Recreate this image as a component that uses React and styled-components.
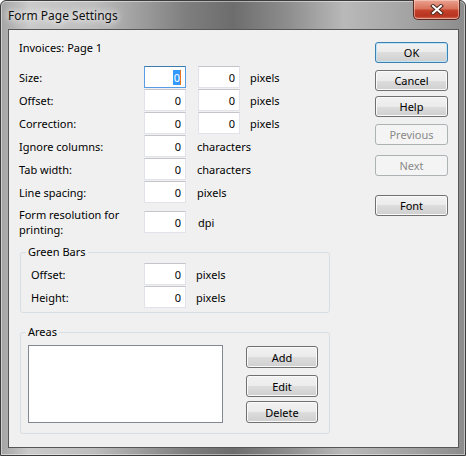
import React from 'react'
import styled, { createGlobalStyle } from 'styled-components'

const GlobalStyle = createGlobalStyle`
    html, body {
        margin: 0;
        padding: 0;
        background: #ffffff;
    }
    body {
        font-family: "Segoe UI", "Noto Sans", sans-serif;
        font-size: 11px;
        color: #000;
    }
`

//Ventana

const Window = styled.div`
    width: 466px;
    height: 456px;
    box-sizing: border-box;
    display: flex;
    flex-direction: column;
    border: 1px solid #3c3c3c;
    border-radius: 6px 6px 0 0;
    padding: 0 6px 7px 7px;
    background:
        linear-gradient(to right, #a4a4a4 0%, #cacaca 6%, #bdbdbd 20%, #7e7e7e 40%, #6d6d6d 50%, #8e8e8e 62%, #b9b9b9 74%, #a3a3a3 88%, #8c8c8c 100%);
    box-shadow: inset 0 0 0 1px rgba(255, 255, 255, 0.45);
`

const TitleBar = styled.div`
    height: 28px;
    display: flex;
    align-items: flex-start;
    flex-shrink: 0;
`

const Title = styled.div`
    margin-top: 7px;
    font-size: 12px;
    line-height: 15px;
    color: #101010;
    text-shadow: 0 0 6px #ffffff, 0 0 10px #ffffff;
`

const CloseBtn = styled.div`
    margin-left: auto;
    margin-right: -1px;
    margin-top: -1px;
    width: 47px;
    height: 20px;
    box-sizing: border-box;
    border: 1px solid #5a2a20;
    border-top: none;
    border-radius: 0 0 5px 5px;
    display: flex;
    align-items: center;
    justify-content: center;
    background: linear-gradient(#eaa390 0%, #d9735d 45%, #c4412a 55%, #b83320 85%, #d27560 100%);
    box-shadow: inset 0 0 0 1px rgba(255, 220, 210, 0.5);
`

const Client = styled.div`
    flex: 1;
    display: flex;
    border: 1px solid #565656;
    background: #f0f0f0;
`

//Formulario

const LeftCol = styled.div`
    display: flex;
    flex-direction: column;
    padding: 10px 0 0 10px;
`

const Heading = styled.div`
    line-height: 15px;
`

const Rows = styled.div`
    display: flex;
    flex-direction: column;
    gap: 1px;
    margin-top: ${p => p.$mt || 0}px;
`

const Row = styled.div`
    display: flex;
    align-items: center;
    min-height: 22px;
    margin-top: ${p => p.$mt || 0}px;
`

const Label = styled.div`
    width: ${p => p.$w || 125}px;
    line-height: 15px;
    flex-shrink: 0;
`

const TextBox = styled.div`
    width: 42px;
    height: 22px;
    box-sizing: border-box;
    margin-left: ${p => p.$ml || 0}px;
    background: #fff;
    border: 1px solid ${p => p.$focused ? '#569de5' : '#e2e3ea'};
    border-top-color: ${p => p.$focused ? '#3d7bad' : '#c3c5cb'};
    display: flex;
    align-items: center;
    justify-content: flex-end;
    padding-right: 4px;
    line-height: 15px;
`

const Selected = styled.span`
    background: #3399ff;
    color: #fff;
    border-right: 1px solid #e8731c;
    padding: 0 0 0 1px;
`

const Unit = styled.div`
    margin-left: ${p => p.$ml || 10}px;
    line-height: 15px;
`

const Group = styled.div`
    position: relative;
    width: 310px;
    box-sizing: border-box;
    margin-left: 1px;
    margin-top: ${p => p.$mt}px;
    border: 1px solid #d5dfe5;
    border-radius: 3px;
    padding: ${p => p.$pad};
`

const Caption = styled.span`
    position: absolute;
    top: -9px;
    left: 5px;
    padding: 0 2px;
    line-height: 15px;
    background: #f0f0f0;
`

const AreasBody = styled.div`
    display: flex;
    align-items: flex-start;
`

const ListBox = styled.div`
    width: 195px;
    height: 78px;
    box-sizing: border-box;
    background: #fff;
    border: 1px solid #828790;
`

const AreaButtons = styled.div`
    display: flex;
    flex-direction: column;
    margin-left: 23px;
    margin-top: 1px;
`

//Botones

const RightCol = styled.div`
    margin-left: auto;
    margin-right: 10px;
    padding-top: 12px;
    display: flex;
    flex-direction: column;
`

const Button = styled.div`
    width: ${p => p.$w || 73}px;
    height: ${p => p.$h || 21}px;
    box-sizing: border-box;
    margin-top: ${p => p.$mt || 0}px;
    border: 1px solid ${p => p.$default ? '#3c7fb1' : p.$disabled ? '#adb2b5' : '#707070'};
    border-radius: 3px;
    display: flex;
    align-items: center;
    justify-content: center;
    line-height: 15px;
    color: ${p => p.$disabled ? '#8a8a8a' : '#000'};
    background: ${p => p.$disabled
        ? '#f4f4f4'
        : 'linear-gradient(#f2f2f2 0%, #ebebeb 50%, #dddddd 50%, #cfcfcf 100%)'};
    box-shadow: inset 0 0 0 1px ${p => p.$default ? '#bfe3f7' : p.$disabled ? '#f4f4f4' : '#fafafa'};
`

const CloseIcon = () => (
    <svg width="14" height="11" viewBox="0 0 14 11">
        <path d="M3 2 L11 9 M11 2 L3 9" stroke="#4a2a22" strokeWidth="4" strokeLinecap="square" />
        <path d="M3 2 L11 9 M11 2 L3 9" stroke="#ffffff" strokeWidth="2" strokeLinecap="square" />
    </svg>
)

const MAIN_ROWS = [
    { label: 'Size:', boxes: 2, unit: 'pixels', focused: true },
    { label: 'Offset:', boxes: 2, unit: 'pixels' },
    { label: 'Correction:', boxes: 2, unit: 'pixels' },
    { label: 'Ignore columns:', boxes: 1, unit: 'characters' },
    { label: 'Tab width:', boxes: 1, unit: 'characters' },
    { label: 'Line spacing:', boxes: 1, unit: 'pixels' },
]

const SIDE_BUTTONS = [
    { text: 'OK', mt: 0, def: true },
    { text: 'Cancel', mt: 7 },
    { text: 'Help', mt: 5 },
    { text: 'Previous', mt: 7, disabled: true },
    { text: 'Next', mt: 10, disabled: true },
    { text: 'Font', mt: 19 },
]

const App = () => {
    return (
        <>
            <GlobalStyle />
            <Window>
                <TitleBar>
                    <Title>Form Page Settings</Title>
                    <CloseBtn><CloseIcon /></CloseBtn>
                </TitleBar>
                <Client>
                    <LeftCol>
                        <Heading>Invoices: Page 1</Heading>
                        <Rows $mt={11}>
                            {MAIN_ROWS.map(r => (
                                <Row key={r.label}>
                                    <Label>{r.label}</Label>
                                    <TextBox $focused={r.focused}>
                                        {r.focused ? <Selected>0</Selected> : '0'}
                                    </TextBox>
                                    {r.boxes === 2 && <TextBox $ml={12}>0</TextBox>}
                                    <Unit $ml={r.boxes === 2 ? 10 : 11}>{r.unit}</Unit>
                                </Row>
                            ))}
                        </Rows>
                        <Row $mt={4}>
                            <Label>Form resolution for<br />printing:</Label>
                            <TextBox>0</TextBox>
                            <Unit $ml={12}>dpi</Unit>
                        </Row>
                        <Group $mt={15} $pad="10px 0 4px 10px">
                            <Caption>Green Bars</Caption>
                            <Rows>
                                <Row>
                                    <Label $w={113}>Offset:</Label>
                                    <TextBox>0</TextBox>
                                    <Unit>pixels</Unit>
                                </Row>
                                <Row>
                                    <Label $w={113}>Height:</Label>
                                    <TextBox>0</TextBox>
                                    <Unit>pixels</Unit>
                                </Row>
                            </Rows>
                        </Group>
                        <Group $mt={19} $pad="12px 0 10px 7px">
                            <Caption>Areas</Caption>
                            <AreasBody>
                                <ListBox />
                                <AreaButtons>
                                    <Button $w={72} $h={22}>Add</Button>
                                    <Button $w={72} $h={22} $mt={7}>Edit</Button>
                                    <Button $w={72} $h={22} $mt={4}>Delete</Button>
                                </AreaButtons>
                            </AreasBody>
                        </Group>
                    </LeftCol>
                    <RightCol>
                        {SIDE_BUTTONS.map(b => (
                            <Button key={b.text} $mt={b.mt} $default={b.def} $disabled={b.disabled}>
                                {b.text}
                            </Button>
                        ))}
                    </RightCol>
                </Client>
            </Window>
        </>
    )
}

export default App
